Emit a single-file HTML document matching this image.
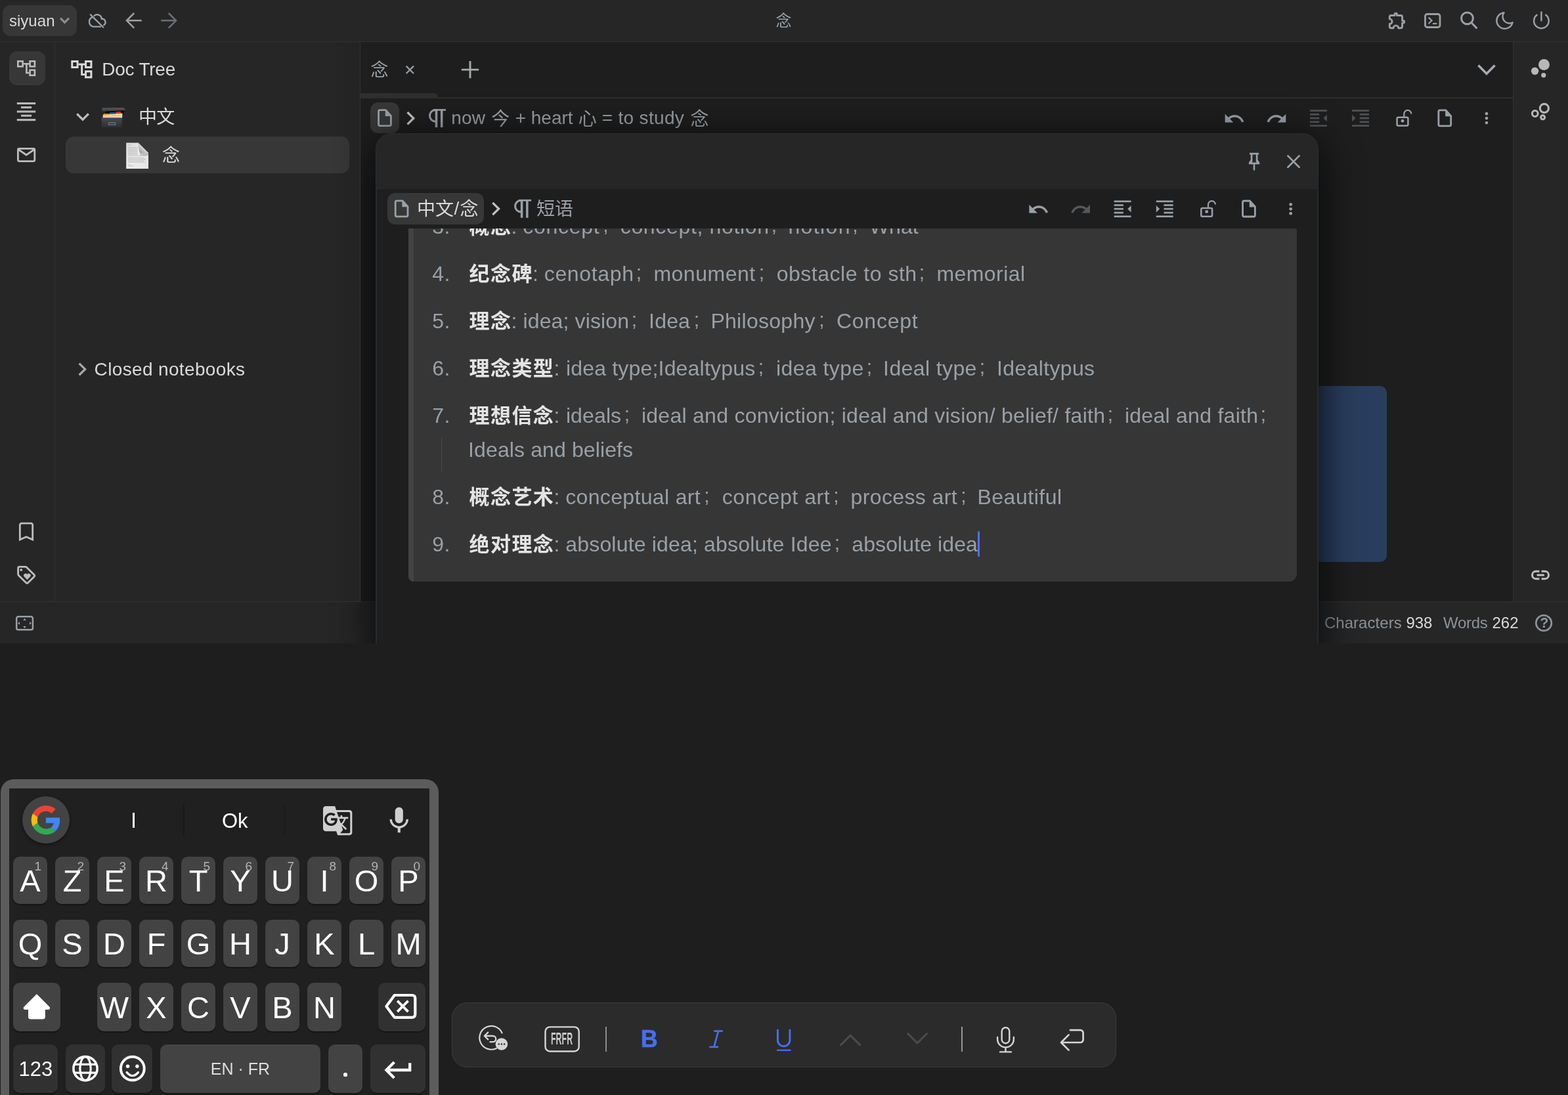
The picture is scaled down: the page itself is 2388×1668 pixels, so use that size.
<!DOCTYPE html>
<html><head><meta charset="utf-8"><title>siyuan</title>
<style>
html,body{margin:0;padding:0;background:#1e1e1e;}
body{width:2388px;height:1668px;position:relative;overflow:hidden;font-family:"Liberation Sans",sans-serif;}
.a{position:absolute;display:block;}
.t{position:absolute;line-height:1;white-space:pre;}
.c{font-family:"Liberation Sans","Noto Sans CJK SC",sans-serif;}
#root{position:absolute;left:0;top:0;width:2388px;height:1668px;will-change:transform;}
svg.a{fill:currentColor;overflow:visible;}
</style></head><body>
<div id="root">
<div class="a" style="left:0;top:0;width:2388px;height:980px;overflow:hidden;background:#1e1e1e">
<div class="a" style="left:0px;top:0px;width:2388px;height:63px;background:#262626;"></div>
<div class="a" style="left:0px;top:63px;width:2388px;height:1px;background:#323232;"></div>
<div class="a" style="left:0px;top:64px;width:83px;height:852px;background:#262626;"></div>
<div class="a" style="left:83px;top:64px;width:1px;height:852px;background:#323232;"></div>
<div class="a" style="left:84px;top:64px;width:464px;height:852px;background:#262626;"></div>
<div class="a" style="left:548px;top:64px;width:1px;height:852px;background:#323232;"></div>
<div class="a" style="left:2305px;top:64px;width:83px;height:852px;background:#262626;"></div>
<div class="a" style="left:2304px;top:64px;width:1px;height:852px;background:#323232;"></div>
<div class="a" style="left:0px;top:917px;width:2388px;height:63px;background:#262626;"></div>
<div class="a" style="left:0px;top:916px;width:2388px;height:1px;background:#323232;"></div>
<div class="a" style="left:549px;top:148px;width:1755px;height:2px;background:#2e2e2e;"></div>
<div class="a" style="left:549px;top:142px;width:118px;height:6px;background:#2f2f2f;border-radius:0 6px 0 0;"></div>
<div class="a" style="left:4px;top:8px;width:113px;height:47px;background:#373737;border-radius:12px;"></div>
<span class="t" style="left:13.88px;top:19.68px;font-size:24px;color:#dadada;letter-spacing:0.050px;">siyuan</span>
<div class="a" style="left:14px;top:78px;width:55px;height:52px;background:#373737;border-radius:12px;"></div>
<span class="t" style="left:155.25px;top:92.30px;font-size:28px;color:#dadada;letter-spacing:-0.232px;">Doc Tree</span>
<span class="t c" style="left:211.00px;top:165.36px;font-size:28px;color:#dadada;letter-spacing:-0.8px;">中文</span>
<div class="a" style="left:100px;top:208px;width:432px;height:56px;background:#373737;border-radius:12px;"></div>
<span class="t c" style="left:246.90px;top:224.24px;font-size:27px;color:#dadada;">念</span>
<span class="t" style="left:143.62px;top:549.30px;font-size:28px;color:#dadada;letter-spacing:0.350px;">Closed notebooks</span>
<span class="t c" style="left:1181.50px;top:20.38px;font-size:24px;color:#9aa0a6;">念</span>
<span class="t c" style="left:564.60px;top:94.24px;font-size:27px;color:#9aa0a6;">念</span>
<div class="a" style="left:564px;top:156px;width:44px;height:47px;background:#373737;border-radius:12px;"></div>
<span class="t" style="left:687.25px;top:166.30px;font-size:28px;color:#9aa0a6;letter-spacing:0.125px;">now</span>
<span class="t c" style="left:748.30px;top:167.86px;font-size:28px;color:#9aa0a6;">今</span>
<span class="t" style="left:784.65px;top:166.30px;font-size:28px;color:#9aa0a6;">+ heart</span>
<span class="t c" style="left:880.80px;top:167.86px;font-size:28px;color:#9aa0a6;">心</span>
<span class="t" style="left:916.75px;top:166.30px;font-size:28px;color:#9aa0a6;letter-spacing:0.314px;">= to study</span>
<span class="t c" style="left:1051.40px;top:167.86px;font-size:28px;color:#9aa0a6;">念</span>
<div class="a" style="left:1900px;top:588px;width:212px;height:268px;background:#293e5e;border-radius:10px;"></div>
<span class="t" style="left:2016.88px;top:936.68px;font-size:24px;color:#8c9298;letter-spacing:0.056px;">Characters</span>
<span class="t" style="left:2141.38px;top:936.68px;font-size:24px;color:#dadada;">938</span>
<span class="t" style="left:2198.00px;top:936.68px;font-size:24px;color:#8c9298;letter-spacing:-0.281px;">Words</span>
<span class="t" style="left:2272.38px;top:936.68px;font-size:24px;color:#dadada;letter-spacing:0.062px;">262</span>
<svg class="a" style="left:0;top:0;width:2388px;height:1668px;pointer-events:none" viewBox="0 0 2388 1668"><path d="M92 27.7 L98.5 34.2 L105 27.7" fill="none" stroke="#8c8c8c" stroke-width="3.2" stroke-linecap="butt" stroke-linejoin="miter"/><path d="M137.9 22.3 L157.3 41.5" fill="none" stroke="#9aa0a6" stroke-width="2.4" stroke-linecap="round" stroke-linejoin="miter"/><path d="M140.1 26.4 A7.6 7.6 0 0 0 142 40.6 L153 40.6" fill="none" stroke="#9aa0a6" stroke-width="2.4" stroke-linecap="round" stroke-linejoin="round"/><path d="M143.6 23.9 A6.8 6.8 0 0 1 154.8 28.9 A5 5 0 0 1 158.3 38" fill="none" stroke="#9aa0a6" stroke-width="2.4" stroke-linecap="round" stroke-linejoin="round"/><path d="M204.2 20 L192.9 31.3 L204.2 42.6 M193.2 31.3 L215.8 31.3" fill="none" stroke="#9aa0a6" stroke-width="2.5" stroke-linecap="butt" stroke-linejoin="miter"/><path d="M256.8 20 L268.1 31.3 L256.8 42.6 M267.8 31.3 L245.2 31.3" fill="none" stroke="#6b6f73" stroke-width="2.5" stroke-linecap="butt" stroke-linejoin="miter"/><path d="M2116.3 26 Q2116.3 23.5 2118.8 23.5 H2124.1 V21.9 A1.7 1.7 0 0 1 2127.5 21.9 V23.5 H2133.1 Q2135.6 23.5 2135.6 26 V31.5 H2137 A1.7 1.7 0 0 1 2137 34.9 H2135.6 V40.2 Q2135.6 42.7 2133.1 42.7 H2129.7 A3.8 3.8 0 0 0 2122.1 42.7 H2118.8 Q2116.3 42.7 2116.3 40.2 V36.5 A3.8 3.8 0 0 0 2116.3 28.9 Z" fill="none" stroke="#9aa0a6" stroke-width="2.9" stroke-linecap="round" stroke-linejoin="round"/><path d="M2173.5 21.5 h16.5 a3 3 0 0 1 3 3 v14 a3 3 0 0 1 -3 3 h-16.5 a3 3 0 0 1 -3 -3 v-14 a3 3 0 0 1 3 -3 z" fill="none" stroke="#9aa0a6" stroke-width="2.8" stroke-linecap="butt" stroke-linejoin="miter"/><path d="M2175.6 26.6 L2180.6 31.3 L2175.6 36" fill="none" stroke="#9aa0a6" stroke-width="2.2" stroke-linecap="butt" stroke-linejoin="miter"/><path d="M2182 36 H2188.3" fill="none" stroke="#9aa0a6" stroke-width="2.2" stroke-linecap="butt" stroke-linejoin="miter"/><path d="M2243.4 27.8 a8.9 8.9 0 1 1 -17.8 0 a8.9 8.9 0 1 1 17.8 0 z M2240.6 34.2 L2249.4 43.4" fill="none" stroke="#9aa0a6" stroke-width="3" stroke-linecap="butt" stroke-linejoin="miter"/><path d="M2290.5 19.2 A12.3 12.3 0 1 0 2303.6 34.2 A10.2 10.2 0 0 1 2290.5 19.2 Z" fill="none" stroke="#9aa0a6" stroke-width="2.4" stroke-linecap="round" stroke-linejoin="round"/><path d="M2340.6 22.8 A11.3 11.3 0 1 0 2354.2 22.8 M2347.4 18.6 V31.2" fill="none" stroke="#9aa0a6" stroke-width="2.5" stroke-linecap="round" stroke-linejoin="miter"/><path d="M27.30 93.30 h7.30 v8.00 h-7.30 zM45.60 93.30 h7.30 v8.00 h-7.30 zM45.60 106.70 h7.30 v8.00 h-7.30 z" fill="none" stroke="#bdbdbd" stroke-width="2.6" stroke-linecap="butt" stroke-linejoin="miter"/><path d="M35.90 97.30 H44.30 M40.40 97.30 V111.00 H44.30" fill="none" stroke="#bdbdbd" stroke-width="2.6" stroke-linecap="butt" stroke-linejoin="miter"/><path d="M109.78 93.48 h8.30 v9.10 h-8.30 zM130.59 93.48 h8.30 v9.10 h-8.30 zM130.59 108.71 h8.30 v9.10 h-8.30 z" fill="none" stroke="#dcdcdc" stroke-width="2.9562" stroke-linecap="butt" stroke-linejoin="miter"/><path d="M119.56 98.03 H129.11 M124.67 98.03 V113.60 H129.11" fill="none" stroke="#dcdcdc" stroke-width="2.9562" stroke-linecap="butt" stroke-linejoin="miter"/><path d="M25.8 157.5 H54.2" fill="none" stroke="#b9b9b9" stroke-width="3.1" stroke-linecap="butt" stroke-linejoin="miter"/><path d="M32 163.6 H48.1" fill="none" stroke="#b9b9b9" stroke-width="3.1" stroke-linecap="butt" stroke-linejoin="miter"/><path d="M25.8 170 H54.2" fill="none" stroke="#b9b9b9" stroke-width="3.1" stroke-linecap="butt" stroke-linejoin="miter"/><path d="M32 176.2 H48.1" fill="none" stroke="#b9b9b9" stroke-width="3.1" stroke-linecap="butt" stroke-linejoin="miter"/><path d="M25.8 182.6 H54.2" fill="none" stroke="#b9b9b9" stroke-width="3.1" stroke-linecap="butt" stroke-linejoin="miter"/><path d="M29.2 226.4 h21.8 a1.8 1.8 0 0 1 1.8 1.8 v15.6 a1.8 1.8 0 0 1 -1.8 1.8 h-21.8 a1.8 1.8 0 0 1 -1.8 -1.8 v-15.6 a1.8 1.8 0 0 1 1.8 -1.8 z M27.8 227.6 L40.1 236 L52.4 227.6" fill="none" stroke="#bdbdbd" stroke-width="2.8" stroke-linecap="butt" stroke-linejoin="round"/><path d="M117.2 173.4 L126 182.2 L134.8 173.4" fill="none" stroke="#bdbdbd" stroke-width="3.4" stroke-linecap="butt" stroke-linejoin="miter"/><path d="M120.6 553.6 L129.6 562.4 L120.6 571.2" fill="none" stroke="#a8a8a8" stroke-width="3.3" stroke-linecap="butt" stroke-linejoin="miter"/><defs>
<linearGradient id="bx1" x1="0" y1="0" x2="0" y2="1"><stop offset="0" stop-color="#474a4f"/><stop offset="1" stop-color="#2c2f33"/></linearGradient>
<linearGradient id="bx2" x1="0" y1="0" x2="0" y2="1"><stop offset="0" stop-color="#55585d"/><stop offset="1" stop-color="#3a3d41"/></linearGradient>
<linearGradient id="pg1" x1="0" y1="0" x2="1" y2="1"><stop offset="0" stop-color="#d9d9d9"/><stop offset=".5" stop-color="#ececec"/><stop offset="1" stop-color="#e4e4e4"/></linearGradient>
<linearGradient id="pg2" x1="0" y1="1" x2="1" y2="0"><stop offset="0" stop-color="#8a8a8a"/><stop offset=".45" stop-color="#d0d0d0"/><stop offset="1" stop-color="#f6f6f6"/></linearGradient>
</defs><path d="M161 168.5 L189.5 167.5 L189 175 L160 176 Z" fill="#0b0b0c"/><path d="M185.3 179.3 L191 167.6 L190.6 181.6 L185.6 193.8 Z" fill="#26292c"/><path d="M157 174.2 L186.5 172.6 L186 180 L156.4 180 Z" fill="#f1d99f"/><path d="M156.6 176.8 L186.3 175.3 L186.2 176.3 L156.5 177.8 Z" fill="#d9bd7c"/><path d="M158 173.3 L165.5 172.9 L166.3 175 L157.6 175.4 Z" fill="#f28a22"/><path d="M167 171.6 L174.8 171.2 L175.4 173.5 L166.6 173.9 Z" fill="#2d5fc6"/><path d="M176 170.4 L183.8 170 L184.6 172.4 L175.6 172.8 Z" fill="#de3f28"/><path d="M154.4 179.2 L185.6 179.2 L185.6 194 L154.8 194 Z" fill="url(#bx1)"/><path d="M155.2 166.2 Q155.2 164.4 157 164.3 L187.4 163.9 Q188.6 163.9 189.4 164.8 L191 166.8 L190.8 168.2 L156.6 169.6 Q155.2 169.6 155.2 168.2 Z" fill="url(#bx2)"/><path d="M166.6 186.8 h8.2 a1.4 1.4 0 0 1 1.4 1.4 v.6 a1.4 1.4 0 0 1 -1.4 1.4 h-8.2 a1.4 1.4 0 0 1 -1.4 -1.4 v-.6 a1.4 1.4 0 0 1 1.4 -1.4 z" fill="none" stroke="#74787d" stroke-width="1.3" stroke-linecap="butt" stroke-linejoin="miter"/><path d="M192.2 217.6 L210.5 217.6 L226 233 L226 257 L192.2 257 Z" fill="url(#pg1)"/><path d="M210.5 217.6 L226 233 L226 236.5 Q219 238.5 213.5 236 Q211.5 228 210.5 217.6 Z" fill="#9a9a9a" opacity=".55"/><path d="M210.5 217.6 L226 233 Q217 233.6 212.8 232.6 Q211.2 227 210.5 217.6 Z" fill="url(#pg2)"/><path d="M195 221 H200" fill="none" stroke="#b9b9b9" stroke-width="0.8" stroke-linecap="butt" stroke-linejoin="miter"/><path d="M195 224.4 H209.5" fill="none" stroke="#b9b9b9" stroke-width="0.8" stroke-linecap="butt" stroke-linejoin="miter"/><path d="M195 226.2 H209.5" fill="none" stroke="#b9b9b9" stroke-width="0.8" stroke-linecap="butt" stroke-linejoin="miter"/><path d="M195 228 H209.5" fill="none" stroke="#b9b9b9" stroke-width="0.8" stroke-linecap="butt" stroke-linejoin="miter"/><path d="M195 229.8 H209.5" fill="none" stroke="#b9b9b9" stroke-width="0.8" stroke-linecap="butt" stroke-linejoin="miter"/><path d="M195 231.6 H209.5" fill="none" stroke="#b9b9b9" stroke-width="0.8" stroke-linecap="butt" stroke-linejoin="miter"/><path d="M195 233.4 H209.5" fill="none" stroke="#b9b9b9" stroke-width="0.8" stroke-linecap="butt" stroke-linejoin="miter"/><path d="M195 235.2 H209.5" fill="none" stroke="#b9b9b9" stroke-width="0.8" stroke-linecap="butt" stroke-linejoin="miter"/><path d="M195 237 H222" fill="none" stroke="#b9b9b9" stroke-width="0.8" stroke-linecap="butt" stroke-linejoin="miter"/><path d="M195 240 H219" fill="none" stroke="#b9b9b9" stroke-width="0.8" stroke-linecap="butt" stroke-linejoin="miter"/><path d="M195 241.8 H222" fill="none" stroke="#b9b9b9" stroke-width="0.8" stroke-linecap="butt" stroke-linejoin="miter"/><path d="M195 243.6 H222" fill="none" stroke="#b9b9b9" stroke-width="0.8" stroke-linecap="butt" stroke-linejoin="miter"/><path d="M195 245.4 H219" fill="none" stroke="#b9b9b9" stroke-width="0.8" stroke-linecap="butt" stroke-linejoin="miter"/><path d="M195 247.2 H222" fill="none" stroke="#b9b9b9" stroke-width="0.8" stroke-linecap="butt" stroke-linejoin="miter"/><path d="M195 251 H200" fill="none" stroke="#b9b9b9" stroke-width="0.8" stroke-linecap="butt" stroke-linejoin="miter"/><path d="M195 253 H203.5" fill="none" stroke="#b9b9b9" stroke-width="0.8" stroke-linecap="butt" stroke-linejoin="miter"/><path transform="translate(1862.90 163.70) scale(1.4 1.42)" d="M12.5 8c-2.65 0-5.05.99-6.9 2.6L2 7v9h9l-3.62-3.62c1.39-1.16 3.16-1.88 5.12-1.88 3.54 0 6.55 2.31 7.6 5.5l2.37-.78C21.08 11.03 17.15 8 12.5 8z" fill="#9aa0a6"/><path transform="translate(1927.50 163.70) scale(1.4 1.42)" d="M18.4 10.6C16.55 8.99 14.15 8 11.5 8c-4.65 0-8.58 3.03-9.96 7.22L3.9 16c1.05-3.19 4.05-5.5 7.6-5.5 1.95 0 3.73.72 5.12 1.88L13 16h9V7l-3.6 3.6z" fill="#9aa0a6"/><path d="M1995.00 168.55 h25.9" fill="none" stroke="#505356" stroke-width="2.7" stroke-linecap="butt" stroke-linejoin="miter"/><path d="M1995.00 191.50 h25.9" fill="none" stroke="#505356" stroke-width="2.7" stroke-linecap="butt" stroke-linejoin="miter"/><path d="M1995.00 174.30 h14.2" fill="none" stroke="#505356" stroke-width="2.7" stroke-linecap="butt" stroke-linejoin="miter"/><path d="M1995.00 180.00 h14.2" fill="none" stroke="#505356" stroke-width="2.7" stroke-linecap="butt" stroke-linejoin="miter"/><path d="M1995.00 185.80 h14.2" fill="none" stroke="#505356" stroke-width="2.7" stroke-linecap="butt" stroke-linejoin="miter"/><path d="M2020.90 174.80 L2015.50 180.00 L2020.90 185.20 Z" fill="#505356"/><path d="M2059.10 168.55 h25.9" fill="none" stroke="#505356" stroke-width="2.7" stroke-linecap="butt" stroke-linejoin="miter"/><path d="M2059.10 191.50 h25.9" fill="none" stroke="#505356" stroke-width="2.7" stroke-linecap="butt" stroke-linejoin="miter"/><path d="M2070.80 174.30 h14.2" fill="none" stroke="#505356" stroke-width="2.7" stroke-linecap="butt" stroke-linejoin="miter"/><path d="M2070.80 180.00 h14.2" fill="none" stroke="#505356" stroke-width="2.7" stroke-linecap="butt" stroke-linejoin="miter"/><path d="M2070.80 185.80 h14.2" fill="none" stroke="#505356" stroke-width="2.7" stroke-linecap="butt" stroke-linejoin="miter"/><path d="M2059.10 174.80 L2064.50 180.00 L2059.10 185.20 Z" fill="#505356"/><path d="M2129.60 178.85 h12.8 a2 2 0 0 1 2 2 v8.6 a2 2 0 0 1 -2 2 h-12.8 a2 2 0 0 1 -2 -2 v-8.6 a2 2 0 0 1 2 -2 z" fill="none" stroke="#9aa0a6" stroke-width="2.5" stroke-linecap="butt" stroke-linejoin="miter"/><circle cx="2136.00" cy="184.20" r="2.4" fill="#9aa0a6"/><path d="M2138.30 178.60 V173.40 a5.5 5.5 0 0 1 11 0" fill="none" stroke="#9aa0a6" stroke-width="2.2" stroke-linecap="butt" stroke-linejoin="miter"/><path d="M2192.90 167.80 H2201.70 L2209.70 176.60 V189.80 a2 2 0 0 1 -2 2 H2192.90 a2 2 0 0 1 -2 -2 V169.80 a2 2 0 0 1 2 -2 z" fill="none" stroke="#9aa0a6" stroke-width="2.8" stroke-linecap="butt" stroke-linejoin="round"/><path d="M2201.10 167.40 L2210.30 177.30 H2201.10 Z" fill="#9aa0a6"/><circle cx="2264.00" cy="173.20" r="2.35" fill="#9aa0a6"/><circle cx="2264.00" cy="180.10" r="2.35" fill="#9aa0a6"/><circle cx="2264.00" cy="187.00" r="2.35" fill="#9aa0a6"/><path d="M578.60 167.60 H587.40 L595.40 176.40 V189.60 a2 2 0 0 1 -2 2 H578.60 a2 2 0 0 1 -2 -2 V169.60 a2 2 0 0 1 2 -2 z" fill="none" stroke="#9aa0a6" stroke-width="2.8" stroke-linecap="butt" stroke-linejoin="round"/><path d="M586.80 167.20 L596.00 177.10 H586.80 Z" fill="#9aa0a6"/><path d="M660.00 167.40 H679.00" fill="none" stroke="#9aa0a6" stroke-width="2.7" stroke-linecap="butt" stroke-linejoin="miter"/><path d="M664.50 166.20 V193.90 M672.70 166.20 V193.90" fill="none" stroke="#9aa0a6" stroke-width="3.5" stroke-linecap="butt" stroke-linejoin="miter"/><path d="M663.20 167.50 A8.75 8.75 0 0 0 663.20 185.00" fill="none" stroke="#9aa0a6" stroke-width="3.0" stroke-linecap="butt" stroke-linejoin="miter"/><path d="M620.5 171 L629.8 180.2 L620.5 189.4" fill="none" stroke="#c2c2c2" stroke-width="3.3" stroke-linecap="butt" stroke-linejoin="miter"/><path d="M618.6 100.6 L630 112 M630 100.6 L618.6 112" fill="none" stroke="#9aa0a6" stroke-width="2.2" stroke-linecap="butt" stroke-linejoin="miter"/><path d="M716 93 V119.2 M702.9 106.1 H729.1" fill="none" stroke="#a7abb0" stroke-width="2.9" stroke-linecap="butt" stroke-linejoin="miter"/><path d="M2251.4 99.6 L2264 112.2 L2276.6 99.6" fill="none" stroke="#a7abb0" stroke-width="3.6" stroke-linecap="butt" stroke-linejoin="miter"/><circle cx="2351.5" cy="98.4" r="8.5" fill="#b8b8b8"/><circle cx="2337.6" cy="108.3" r="5.7" fill="#b8b8b8"/><circle cx="2350.8" cy="114.6" r="3.65" fill="#b8b8b8"/><circle cx="2351.9" cy="164.9" r="6.55" fill="none" stroke="#b8b8b8" stroke-width="3.1"/><circle cx="2337.8" cy="173" r="4.4" fill="none" stroke="#b8b8b8" stroke-width="3.0"/><circle cx="2349.6" cy="178.8" r="3.0" fill="none" stroke="#b8b8b8" stroke-width="3.0"/><path d="M2344.4 870.35 H2339.1 a5.65 5.65 0 0 0 0 11.3 H2344.4 M2347.6 870.35 H2352.9 a5.65 5.65 0 0 1 0 11.3 H2347.6 M2340.6 876 H2351.8" fill="none" stroke="#c0c0c0" stroke-width="3.0" stroke-linecap="butt" stroke-linejoin="miter"/><circle cx="2351.1" cy="949.1" r="11.8" fill="none" stroke="#8f959b" stroke-width="2.6"/><path d="M30.35 822 V799.6 a2.4 2.4 0 0 1 2.4 -2.4 H47.3 a2.4 2.4 0 0 1 2.4 2.4 V822 L40.02 817.7 Z" fill="none" stroke="#bdbdbd" stroke-width="2.8" stroke-linecap="butt" stroke-linejoin="miter"/><path d="M29.6 863.4 H38.8 Q39.8 863.4 40.6 864.2 L52 875.6 Q53.4 877 52 878.4 L42.6 887.8 Q41.2 889.2 39.8 887.8 L28.4 876.4 Q27.6 875.6 27.6 874.6 V865.4 Q27.6 863.4 29.6 863.4 Z" fill="none" stroke="#bdbdbd" stroke-width="2.8" stroke-linecap="round" stroke-linejoin="round"/><circle cx="32.2" cy="868.2" r="1.9" fill="#bdbdbd"/><path d="M41.4 883.2 L36.6 878.2 A2.9 2.9 0 0 1 41.4 874.9 A2.9 2.9 0 0 1 46.2 878.2 Z" fill="#bdbdbd"/><path d="M27.8 939.35 h19.5 a2.6 2.6 0 0 1 2.6 2.6 v14.8 a2.6 2.6 0 0 1 -2.6 2.6 h-19.5 a2.6 2.6 0 0 1 -2.6 -2.6 v-14.8 a2.6 2.6 0 0 1 2.6 -2.6 z" fill="none" stroke="#9aa0a6" stroke-width="2.5" stroke-linecap="butt" stroke-linejoin="miter"/><path d="M35.2 945 L37.55 942 L39.9 945 Z M35.2 954 L37.55 957 L39.9 954 Z M30 947.1 L27.2 949.4 L30 951.7 Z M45.1 947.1 L47.9 949.4 L45.1 951.7 Z" fill="#9aa0a6"/></svg>
<span class="t" style="left:2345.22px;top:939.40px;font-size:21.5px;color:#8f959b;font-weight:bold;">?</span>
<div class="a" style="left:549px;top:64px;width:1839px;height:916px;overflow:hidden"><div class="a" style="left:23px;top:139px;width:1436px;height:800px;border-radius:24px;box-shadow:0 14px 62px rgba(0,3,6,.92)"></div></div>
<div class="a" style="left:0;top:917px;width:549px;height:63px;overflow:hidden"><div class="a" style="left:572px;top:-714px;width:1436px;height:800px;border-radius:24px;box-shadow:0 14px 62px rgba(0,3,6,.92)"></div></div>
<div class="a" style="left:500px;top:64px;width:48px;height:852px;background:linear-gradient(90deg,rgba(0,0,0,0),rgba(0,6,6,.09))"></div>
<div class="a" style="left:572px;top:203px;width:1436px;height:800px;border-radius:24px;background:#262626;box-shadow:0 0 0 1px rgba(255,255,255,.04) inset;overflow:hidden">
<div class="a" style="left:-572px;top:-203px;width:2388px;height:1000px">
<div class="a" style="left:572px;top:288px;width:1436px;height:60px;background:#1e1e1e;"></div>
<div class="a" style="left:572px;top:348px;width:1436px;height:640px;background:#1e1e1e;"></div>
<div class="a" style="left:622px;top:340px;width:1353px;height:546px;background:#363636;border-radius:12px;"></div>
<div class="a" style="left:622px;top:340px;width:8px;height:546px;background:#434343;border-radius:12px 0 0 12px;"></div>
<span class="t" style="left:658.3px;top:328.91px;font-size:32px;color:#9aa0a6;letter-spacing:.4px">3.</span>
<span class="t c" style="left:714.60px;top:329.92px;font-size:31px;color:#e4e4e4;font-weight:bold;letter-spacing:1.4px;">概念</span>
<span class="t" style="left:778.52px;top:328.91px;font-size:32px;color:#9aa0a6;">:</span>
<span class="t" style="left:796.25px;top:328.91px;font-size:32px;color:#9aa0a6;letter-spacing:0.708px;">concept</span>
<span class="t" style="left:918.27px;top:328.41px;font-size:30px;color:#9aa0a6;">;</span>
<span class="t" style="left:944.75px;top:328.91px;font-size:32px;color:#9aa0a6;letter-spacing:0.661px;">concept, notion</span>
<span class="t" style="left:1174.78px;top:328.41px;font-size:30px;color:#9aa0a6;">;</span>
<span class="t" style="left:1200.38px;top:328.91px;font-size:32px;color:#9aa0a6;letter-spacing:1.400px;">notion</span>
<span class="t" style="left:1298.28px;top:328.41px;font-size:30px;color:#9aa0a6;">;</span>
<span class="t" style="left:1323.88px;top:328.91px;font-size:32px;color:#9aa0a6;letter-spacing:0.042px;">What</span>
<span class="t" style="left:658.3px;top:400.91px;font-size:32px;color:#9aa0a6;letter-spacing:.4px">4.</span>
<span class="t c" style="left:714.60px;top:401.92px;font-size:31px;color:#e4e4e4;font-weight:bold;letter-spacing:1.4px;">纪念碑</span>
<span class="t" style="left:810.98px;top:400.91px;font-size:32px;color:#9aa0a6;">:</span>
<span class="t" style="left:828.75px;top:400.91px;font-size:32px;color:#9aa0a6;letter-spacing:0.661px;">cenotaph</span>
<span class="t" style="left:968.77px;top:400.41px;font-size:30px;color:#9aa0a6;">;</span>
<span class="t" style="left:995.38px;top:400.91px;font-size:32px;color:#9aa0a6;letter-spacing:0.518px;">monument</span>
<span class="t" style="left:1155.78px;top:400.41px;font-size:30px;color:#9aa0a6;">;</span>
<span class="t" style="left:1182.75px;top:400.91px;font-size:32px;color:#9aa0a6;letter-spacing:0.500px;">obstacle to sth</span>
<span class="t" style="left:1399.78px;top:400.41px;font-size:30px;color:#9aa0a6;">;</span>
<span class="t" style="left:1426.38px;top:400.91px;font-size:32px;color:#9aa0a6;letter-spacing:0.446px;">memorial</span>
<span class="t" style="left:658.3px;top:472.91px;font-size:32px;color:#9aa0a6;letter-spacing:.4px">5.</span>
<span class="t c" style="left:714.60px;top:473.92px;font-size:31px;color:#e4e4e4;font-weight:bold;letter-spacing:1.4px;">理念</span>
<span class="t" style="left:778.52px;top:472.91px;font-size:32px;color:#9aa0a6;">:</span>
<span class="t" style="left:796.48px;top:472.91px;font-size:32px;color:#9aa0a6;letter-spacing:0.139px;">idea; vision</span>
<span class="t" style="left:961.77px;top:472.41px;font-size:30px;color:#9aa0a6;">;</span>
<span class="t" style="left:988.12px;top:472.91px;font-size:32px;color:#9aa0a6;letter-spacing:0.167px;">Idea</span>
<span class="t" style="left:1056.78px;top:472.41px;font-size:30px;color:#9aa0a6;">;</span>
<span class="t" style="left:1082.38px;top:472.91px;font-size:32px;color:#9aa0a6;letter-spacing:0.292px;">Philosophy</span>
<span class="t" style="left:1247.28px;top:472.41px;font-size:30px;color:#9aa0a6;">;</span>
<span class="t" style="left:1273.88px;top:472.91px;font-size:32px;color:#9aa0a6;letter-spacing:0.771px;">Concept</span>
<span class="t" style="left:658.3px;top:544.91px;font-size:32px;color:#9aa0a6;letter-spacing:.4px">6.</span>
<span class="t c" style="left:714.60px;top:545.92px;font-size:31px;color:#e4e4e4;font-weight:bold;letter-spacing:1.4px;">理念类型</span>
<span class="t" style="left:843.42px;top:544.91px;font-size:32px;color:#9aa0a6;">:</span>
<span class="t" style="left:861.88px;top:544.91px;font-size:32px;color:#9aa0a6;letter-spacing:0.191px;">idea type;Idealtypus</span>
<span class="t" style="left:1154.78px;top:544.40px;font-size:30px;color:#9aa0a6;">;</span>
<span class="t" style="left:1181.88px;top:544.91px;font-size:32px;color:#9aa0a6;letter-spacing:0.453px;">idea type</span>
<span class="t" style="left:1319.78px;top:544.40px;font-size:30px;color:#9aa0a6;">;</span>
<span class="t" style="left:1345.12px;top:544.91px;font-size:32px;color:#9aa0a6;letter-spacing:0.389px;">Ideal type</span>
<span class="t" style="left:1491.78px;top:544.40px;font-size:30px;color:#9aa0a6;">;</span>
<span class="t" style="left:1518.12px;top:544.91px;font-size:32px;color:#9aa0a6;letter-spacing:0.347px;">Idealtypus</span>
<span class="t" style="left:658.3px;top:616.91px;font-size:32px;color:#9aa0a6;letter-spacing:.4px">7.</span>
<span class="t c" style="left:714.60px;top:617.92px;font-size:31px;color:#e4e4e4;font-weight:bold;letter-spacing:1.4px;">理想信念</span>
<span class="t" style="left:843.42px;top:616.91px;font-size:32px;color:#9aa0a6;">:</span>
<span class="t" style="left:861.88px;top:616.91px;font-size:32px;color:#9aa0a6;letter-spacing:0.125px;">ideals</span>
<span class="t" style="left:950.77px;top:616.40px;font-size:30px;color:#9aa0a6;">;</span>
<span class="t" style="left:976.88px;top:616.91px;font-size:32px;color:#9aa0a6;letter-spacing:0.272px;">ideal and conviction; ideal and vision/ belief/ faith</span>
<span class="t" style="left:1686.78px;top:616.40px;font-size:30px;color:#9aa0a6;">;</span>
<span class="t" style="left:1712.88px;top:616.91px;font-size:32px;color:#9aa0a6;letter-spacing:0.277px;">ideal and faith</span>
<span class="t" style="left:1919.78px;top:616.40px;font-size:30px;color:#9aa0a6;">;</span>
<span class="t" style="left:658.3px;top:740.91px;font-size:32px;color:#9aa0a6;letter-spacing:.4px">8.</span>
<span class="t c" style="left:714.60px;top:741.92px;font-size:31px;color:#e4e4e4;font-weight:bold;letter-spacing:1.4px;">概念艺术</span>
<span class="t" style="left:843.42px;top:740.91px;font-size:32px;color:#9aa0a6;">:</span>
<span class="t" style="left:861.25px;top:740.91px;font-size:32px;color:#9aa0a6;letter-spacing:0.337px;">conceptual art</span>
<span class="t" style="left:1072.28px;top:740.40px;font-size:30px;color:#9aa0a6;">;</span>
<span class="t" style="left:1099.75px;top:740.91px;font-size:32px;color:#9aa0a6;letter-spacing:0.562px;">concept art</span>
<span class="t" style="left:1269.28px;top:740.40px;font-size:30px;color:#9aa0a6;">;</span>
<span class="t" style="left:1295.50px;top:740.91px;font-size:32px;color:#9aa0a6;letter-spacing:0.388px;">process art</span>
<span class="t" style="left:1463.28px;top:740.40px;font-size:30px;color:#9aa0a6;">;</span>
<span class="t" style="left:1488.38px;top:740.91px;font-size:32px;color:#9aa0a6;letter-spacing:0.531px;">Beautiful</span>
<span class="t" style="left:658.3px;top:812.91px;font-size:32px;color:#9aa0a6;letter-spacing:.4px">9.</span>
<span class="t c" style="left:714.60px;top:813.92px;font-size:31px;color:#e4e4e4;font-weight:bold;letter-spacing:1.4px;">绝对理念</span>
<span class="t" style="left:843.42px;top:812.91px;font-size:32px;color:#9aa0a6;">:</span>
<span class="t" style="left:861.25px;top:812.91px;font-size:32px;color:#9aa0a6;letter-spacing:0.181px;">absolute idea; absolute Idee</span>
<span class="t" style="left:1270.78px;top:812.40px;font-size:30px;color:#9aa0a6;">;</span>
<span class="t" style="left:1297.25px;top:812.91px;font-size:32px;color:#9aa0a6;letter-spacing:0.104px;">absolute idea</span>
<span class="t" style="left:713.12px;top:668.91px;font-size:32px;color:#9aa0a6;letter-spacing:0.110px;">Ideals and beliefs</span>
<div class="a" style="left:672px;top:666px;width:1px;height:52px;background:#4a4a4a;"></div>
<div class="a" style="left:1488.5px;top:809px;width:3px;height:39px;background:#4c72f0;border-radius:1.5px;"></div>
<div class="a" style="left:572px;top:288px;width:1436px;height:60px;background:#1e1e1e;"></div>
<div class="a" style="left:590px;top:294px;width:147px;height:48px;background:#373737;border-radius:12px;"></div>
<span class="t c" style="left:635.00px;top:305.36px;font-size:28px;color:#dadada;">中文</span>
<span class="t" style="left:691.60px;top:304.30px;font-size:28px;color:#dadada;">/</span>
<span class="t c" style="left:700.60px;top:305.36px;font-size:28px;color:#dadada;">念</span>
<span class="t c" style="left:817.00px;top:305.36px;font-size:28px;color:#9aa0a6;">短语</span>
<div class="a" style="left:572px;top:288px;width:2px;height:700px;background:#2a2a2a;"></div>
<div class="a" style="left:2006px;top:288px;width:2px;height:700px;background:#2a2a2a;"></div>
<svg class="a" style="left:0;top:0;width:2388px;height:1668px;pointer-events:none" viewBox="0 0 2388 1668"><path transform="translate(1564.60 301.90) scale(1.4 1.42)" d="M12.5 8c-2.65 0-5.05.99-6.9 2.6L2 7v9h9l-3.62-3.62c1.39-1.16 3.16-1.88 5.12-1.88 3.54 0 6.55 2.31 7.6 5.5l2.37-.78C21.08 11.03 17.15 8 12.5 8z" fill="#9aa0a6"/><path transform="translate(1629.20 301.90) scale(1.4 1.42)" d="M18.4 10.6C16.55 8.99 14.15 8 11.5 8c-4.65 0-8.58 3.03-9.96 7.22L3.9 16c1.05-3.19 4.05-5.5 7.6-5.5 1.95 0 3.73.72 5.12 1.88L13 16h9V7l-3.6 3.6z" fill="#55585b"/><path d="M1696.70 306.75 h25.9" fill="none" stroke="#9aa0a6" stroke-width="2.7" stroke-linecap="butt" stroke-linejoin="miter"/><path d="M1696.70 329.70 h25.9" fill="none" stroke="#9aa0a6" stroke-width="2.7" stroke-linecap="butt" stroke-linejoin="miter"/><path d="M1696.70 312.50 h14.2" fill="none" stroke="#9aa0a6" stroke-width="2.7" stroke-linecap="butt" stroke-linejoin="miter"/><path d="M1696.70 318.20 h14.2" fill="none" stroke="#9aa0a6" stroke-width="2.7" stroke-linecap="butt" stroke-linejoin="miter"/><path d="M1696.70 324.00 h14.2" fill="none" stroke="#9aa0a6" stroke-width="2.7" stroke-linecap="butt" stroke-linejoin="miter"/><path d="M1722.60 313.00 L1717.20 318.20 L1722.60 323.40 Z" fill="#9aa0a6"/><path d="M1760.80 306.75 h25.9" fill="none" stroke="#9aa0a6" stroke-width="2.7" stroke-linecap="butt" stroke-linejoin="miter"/><path d="M1760.80 329.70 h25.9" fill="none" stroke="#9aa0a6" stroke-width="2.7" stroke-linecap="butt" stroke-linejoin="miter"/><path d="M1772.50 312.50 h14.2" fill="none" stroke="#9aa0a6" stroke-width="2.7" stroke-linecap="butt" stroke-linejoin="miter"/><path d="M1772.50 318.20 h14.2" fill="none" stroke="#9aa0a6" stroke-width="2.7" stroke-linecap="butt" stroke-linejoin="miter"/><path d="M1772.50 324.00 h14.2" fill="none" stroke="#9aa0a6" stroke-width="2.7" stroke-linecap="butt" stroke-linejoin="miter"/><path d="M1760.80 313.00 L1766.20 318.20 L1760.80 323.40 Z" fill="#9aa0a6"/><path d="M1831.30 317.05 h12.8 a2 2 0 0 1 2 2 v8.6 a2 2 0 0 1 -2 2 h-12.8 a2 2 0 0 1 -2 -2 v-8.6 a2 2 0 0 1 2 -2 z" fill="none" stroke="#9aa0a6" stroke-width="2.5" stroke-linecap="butt" stroke-linejoin="miter"/><circle cx="1837.70" cy="322.40" r="2.4" fill="#9aa0a6"/><path d="M1840.00 316.80 V311.60 a5.5 5.5 0 0 1 11 0" fill="none" stroke="#9aa0a6" stroke-width="2.2" stroke-linecap="butt" stroke-linejoin="miter"/><path d="M1894.60 306.00 H1903.40 L1911.40 314.80 V328.00 a2 2 0 0 1 -2 2 H1894.60 a2 2 0 0 1 -2 -2 V308.00 a2 2 0 0 1 2 -2 z" fill="none" stroke="#9aa0a6" stroke-width="2.8" stroke-linecap="butt" stroke-linejoin="round"/><path d="M1902.80 305.60 L1912.00 315.50 H1902.80 Z" fill="#9aa0a6"/><circle cx="1965.70" cy="311.40" r="2.35" fill="#9aa0a6"/><circle cx="1965.70" cy="318.30" r="2.35" fill="#9aa0a6"/><circle cx="1965.70" cy="325.20" r="2.35" fill="#9aa0a6"/><path d="M604.20 305.80 H613.00 L621.00 314.60 V327.80 a2 2 0 0 1 -2 2 H604.20 a2 2 0 0 1 -2 -2 V307.80 a2 2 0 0 1 2 -2 z" fill="none" stroke="#9aa0a6" stroke-width="2.8" stroke-linecap="butt" stroke-linejoin="round"/><path d="M612.40 305.40 L621.60 315.30 H612.40 Z" fill="#9aa0a6"/><path d="M790.10 305.20 H809.10" fill="none" stroke="#9aa0a6" stroke-width="2.7" stroke-linecap="butt" stroke-linejoin="miter"/><path d="M794.60 304.00 V331.70 M802.80 304.00 V331.70" fill="none" stroke="#9aa0a6" stroke-width="3.5" stroke-linecap="butt" stroke-linejoin="miter"/><path d="M793.30 305.30 A8.75 8.75 0 0 0 793.30 322.80" fill="none" stroke="#9aa0a6" stroke-width="3.0" stroke-linecap="butt" stroke-linejoin="miter"/><path d="M750.3 308.8 L759.6 318 L750.3 327.2" fill="none" stroke="#c2c2c2" stroke-width="3.3" stroke-linecap="butt" stroke-linejoin="miter"/><path d="M1903 234.2 H1917.1 M1906.1 235 V246.4 M1914.15 235 V246.4" fill="none" stroke="#9aa0a6" stroke-width="2.7" stroke-linecap="butt" stroke-linejoin="miter"/><path d="M1904.8 243.6 L1901.9 247.4 L1901.9 250.2 L1918.2 250.2 L1918.2 247.4 L1915.5 243.6 L1913 247.4 L1907.2 247.4 Z" fill="#9aa0a6"/><path d="M1910 250 V258.6" fill="none" stroke="#9aa0a6" stroke-width="2.5" stroke-linecap="round" stroke-linejoin="miter"/><path d="M1961.4 237.4 L1978.6 254.8 M1978.6 237.4 L1961.4 254.8" fill="none" stroke="#9aa0a6" stroke-width="2.7" stroke-linecap="round" stroke-linejoin="miter"/></svg>
</div></div>
</div>
<div class="a" style="left:1px;top:1187px;width:667px;height:520px;border-radius:20px;background:#5c5c5c"></div>
<div class="a" style="left:14px;top:1201px;width:640px;height:480px;background:#202020;"></div>
<div class="a" style="left:20px;top:1305px;width:52px;height:72px;background:#434343;border-radius:10px;box-shadow:0 2px 1px rgba(0,0,0,.35);"></div>
<div class="a" style="left:84px;top:1305px;width:52px;height:72px;background:#434343;border-radius:10px;box-shadow:0 2px 1px rgba(0,0,0,.35);"></div>
<div class="a" style="left:148px;top:1305px;width:52px;height:72px;background:#434343;border-radius:10px;box-shadow:0 2px 1px rgba(0,0,0,.35);"></div>
<div class="a" style="left:212px;top:1305px;width:52px;height:72px;background:#434343;border-radius:10px;box-shadow:0 2px 1px rgba(0,0,0,.35);"></div>
<div class="a" style="left:276px;top:1305px;width:52px;height:72px;background:#434343;border-radius:10px;box-shadow:0 2px 1px rgba(0,0,0,.35);"></div>
<div class="a" style="left:340px;top:1305px;width:52px;height:72px;background:#434343;border-radius:10px;box-shadow:0 2px 1px rgba(0,0,0,.35);"></div>
<div class="a" style="left:404px;top:1305px;width:52px;height:72px;background:#434343;border-radius:10px;box-shadow:0 2px 1px rgba(0,0,0,.35);"></div>
<div class="a" style="left:468px;top:1305px;width:52px;height:72px;background:#434343;border-radius:10px;box-shadow:0 2px 1px rgba(0,0,0,.35);"></div>
<div class="a" style="left:532px;top:1305px;width:52px;height:72px;background:#434343;border-radius:10px;box-shadow:0 2px 1px rgba(0,0,0,.35);"></div>
<div class="a" style="left:596px;top:1305px;width:52px;height:72px;background:#434343;border-radius:10px;box-shadow:0 2px 1px rgba(0,0,0,.35);"></div>
<div class="a" style="left:20px;top:1401px;width:52px;height:72px;background:#434343;border-radius:10px;box-shadow:0 2px 1px rgba(0,0,0,.35);"></div>
<div class="a" style="left:84px;top:1401px;width:52px;height:72px;background:#434343;border-radius:10px;box-shadow:0 2px 1px rgba(0,0,0,.35);"></div>
<div class="a" style="left:148px;top:1401px;width:52px;height:72px;background:#434343;border-radius:10px;box-shadow:0 2px 1px rgba(0,0,0,.35);"></div>
<div class="a" style="left:212px;top:1401px;width:52px;height:72px;background:#434343;border-radius:10px;box-shadow:0 2px 1px rgba(0,0,0,.35);"></div>
<div class="a" style="left:276px;top:1401px;width:52px;height:72px;background:#434343;border-radius:10px;box-shadow:0 2px 1px rgba(0,0,0,.35);"></div>
<div class="a" style="left:340px;top:1401px;width:52px;height:72px;background:#434343;border-radius:10px;box-shadow:0 2px 1px rgba(0,0,0,.35);"></div>
<div class="a" style="left:404px;top:1401px;width:52px;height:72px;background:#434343;border-radius:10px;box-shadow:0 2px 1px rgba(0,0,0,.35);"></div>
<div class="a" style="left:468px;top:1401px;width:52px;height:72px;background:#434343;border-radius:10px;box-shadow:0 2px 1px rgba(0,0,0,.35);"></div>
<div class="a" style="left:532px;top:1401px;width:52px;height:72px;background:#434343;border-radius:10px;box-shadow:0 2px 1px rgba(0,0,0,.35);"></div>
<div class="a" style="left:596px;top:1401px;width:52px;height:72px;background:#434343;border-radius:10px;box-shadow:0 2px 1px rgba(0,0,0,.35);"></div>
<div class="a" style="left:148px;top:1497px;width:52px;height:74px;background:#434343;border-radius:10px;box-shadow:0 2px 1px rgba(0,0,0,.35);"></div>
<div class="a" style="left:212px;top:1497px;width:52px;height:74px;background:#434343;border-radius:10px;box-shadow:0 2px 1px rgba(0,0,0,.35);"></div>
<div class="a" style="left:276px;top:1497px;width:52px;height:74px;background:#434343;border-radius:10px;box-shadow:0 2px 1px rgba(0,0,0,.35);"></div>
<div class="a" style="left:340px;top:1497px;width:52px;height:74px;background:#434343;border-radius:10px;box-shadow:0 2px 1px rgba(0,0,0,.35);"></div>
<div class="a" style="left:404px;top:1497px;width:52px;height:74px;background:#434343;border-radius:10px;box-shadow:0 2px 1px rgba(0,0,0,.35);"></div>
<div class="a" style="left:468px;top:1497px;width:52px;height:74px;background:#434343;border-radius:10px;box-shadow:0 2px 1px rgba(0,0,0,.35);"></div>
<div class="a" style="left:20px;top:1497px;width:72px;height:74px;background:#434343;border-radius:10px;box-shadow:0 2px 1px rgba(0,0,0,.35);"></div>
<div class="a" style="left:576px;top:1497px;width:72px;height:74px;background:#313131;border-radius:10px;box-shadow:0 2px 1px rgba(0,0,0,.35);"></div>
<div class="a" style="left:20px;top:1591px;width:68px;height:74px;background:#313131;border-radius:10px;box-shadow:0 2px 1px rgba(0,0,0,.35);"></div>
<div class="a" style="left:100px;top:1591px;width:60px;height:74px;background:#313131;border-radius:10px;box-shadow:0 2px 1px rgba(0,0,0,.35);"></div>
<div class="a" style="left:170px;top:1591px;width:62px;height:74px;background:#313131;border-radius:10px;box-shadow:0 2px 1px rgba(0,0,0,.35);"></div>
<div class="a" style="left:244px;top:1591px;width:244px;height:74px;background:#434343;border-radius:10px;box-shadow:0 2px 1px rgba(0,0,0,.35);"></div>
<div class="a" style="left:500px;top:1591px;width:52px;height:74px;background:#434343;border-radius:10px;box-shadow:0 2px 1px rgba(0,0,0,.35);"></div>
<div class="a" style="left:564px;top:1591px;width:84px;height:74px;background:#313131;border-radius:10px;box-shadow:0 2px 1px rgba(0,0,0,.35);"></div>
<div class="a" style="left:523.4px;top:1634.4px;width:5.2px;height:5.2px;background:#ffffff;border-radius:2.6px;"></div>
<div class="a" style="left:34px;top:1213px;width:72px;height:72px;border-radius:36px;background:#434343;box-shadow:0 2px 5px rgba(0,0,0,.45)"></div>
<div class="a" style="left:201.6px;top:1238.2px;width:3.6px;height:22.8px;background:#ffffff;"></div>
<div class="a" style="left:279.4px;top:1225px;width:1.2px;height:48px;background:#181818;"></div>
<div class="a" style="left:433.2px;top:1225px;width:1.2px;height:48px;background:#181818;"></div>
<div class="a" style="left:688px;top:1527px;width:1012px;height:99px;border-radius:24px;background:#2b2b2b;box-shadow:0 0 0 1px #3a3a3a inset"></div>
<div class="a" style="left:921.8px;top:1564px;width:2px;height:38px;background:#8c8c8c;"></div>
<div class="a" style="left:1464px;top:1564px;width:2px;height:38px;background:#9a9a9a;"></div>
<svg class="a" style="left:0;top:0;width:2388px;height:1668px;pointer-events:none" viewBox="0 0 2388 1668"><path transform="translate(47.7 1226.9) scale(0.925)" d="M24 9.5c3.54 0 6.71 1.22 9.21 3.6l6.85-6.85C35.9 2.38 30.47 0 24 0 14.62 0 6.51 5.38 2.56 13.22l7.98 6.19C12.43 13.72 17.74 9.5 24 9.5z" fill="#EA4335"/><path transform="translate(47.7 1226.9) scale(0.925)" d="M46.98 24.55c0-1.57-.15-3.09-.38-4.55H24v9.02h12.94c-.58 2.96-2.26 5.48-4.78 7.18l7.73 6c4.51-4.18 7.09-10.36 7.09-17.65z" fill="#4285F4"/><path transform="translate(47.7 1226.9) scale(0.925)" d="M10.53 28.59c-.48-1.45-.76-2.99-.76-4.59s.27-3.14.76-4.59l-7.98-6.19C.92 16.46 0 20.12 0 24c0 3.88.92 7.54 2.56 10.78l7.97-6.19z" fill="#FBBC05"/><path transform="translate(47.7 1226.9) scale(0.925)" d="M24 48c6.48 0 11.93-2.13 15.89-5.81l-7.73-6c-2.15 1.45-4.92 2.3-8.16 2.3-6.26 0-11.57-4.22-13.47-9.91l-7.98 6.19C6.51 42.62 14.62 48 24 48z" fill="#34A853"/><path transform="translate(490 1225.9) scale(2.014)" d="M21 4H11l-1-3H3c-1.1 0-2 .9-2 2v15c0 1.1.9 2 2 2h8l1 3h9c1.1 0 2-.9 2-2V6c0-1.1-.9-2-2-2zM7 16c-2.76 0-5-2.24-5-5s2.24-5 5-5c1.35 0 2.48.5 3.35 1.3L9.03 8.57c-.38-.36-1.04-.78-2.03-.78-1.74 0-3.15 1.44-3.15 3.21S5.26 14.21 7 14.21c2.01 0 2.84-1.44 2.92-2.41H7v-1.71h4.68c.07.31.12.61.12 1.02C11.8 13.97 9.89 16 7 16zm6.17-5.42h3.7c-.43 1.25-1.11 2.43-2.05 3.47-.31-.35-.6-.72-.86-1.1l-.79-2.37zm8.33 9.92c0 .55-.45 1-1 1H14l2-2.5-1.04-3.1 3.1 3.1.92-.92-3.3-3.25.02-.02c1.13-1.25 1.93-2.69 2.4-4.22H20v-1.3h-4.53V8h-1.29v1.29h-1.44L11.46 5.5h9.04c.55 0 1 .45 1 1v14z" fill="#cfcfcf"/><path transform="translate(583.4 1225.7) scale(2.03)" d="M12 14c1.66 0 2.99-1.34 2.99-3L15 5c0-1.66-1.34-3-3-3S9 3.34 9 5v6c0 1.66 1.34 3 3 3zm5.3-3c0 3-2.54 5.1-5.3 5.1S6.7 14 6.7 11H5c0 3.41 2.72 6.23 6 6.72V21h2v-3.28c3.28-.48 6-3.3 6-6.72h-1.7z" fill="#cfcfcf"/><path d="M55.9 1515.3 L74.6 1534 Q76.6 1536.6 73.4 1537.2 H68 V1549 Q68 1551.8 65.2 1551.8 H46.6 Q43.8 1551.8 43.8 1549 V1537.2 H38.4 Q35.2 1536.6 37.2 1534 Z" fill="#ffffff" stroke="#ffffff" stroke-width="1.6" stroke-linejoin="round"/><path d="M600.8 1516 H627.3 Q632.3 1516 632.3 1521 V1544.8 Q632.3 1549.8 627.3 1549.8 H600.8 L588.4 1532.9 Z" fill="none" stroke="#ffffff" stroke-width="4.2" stroke-linecap="butt" stroke-linejoin="round"/><path d="M605.2 1524.6 L621.6 1541.2 M621.6 1524.6 L605.2 1541.2" fill="none" stroke="#ffffff" stroke-width="3.8" stroke-linecap="butt" stroke-linejoin="miter"/><circle cx="130" cy="1627.7" r="18.1" fill="none" stroke="#ffffff" stroke-width="3.6"/><ellipse cx="130" cy="1627.7" rx="8.2" ry="18.1" fill="none" stroke="#ffffff" stroke-width="3.2"/><path d="M113.4 1621.3 H146.6 M113.4 1634.1 H146.6" fill="none" stroke="#ffffff" stroke-width="3.2" stroke-linecap="butt" stroke-linejoin="miter"/><circle cx="201.8" cy="1627.7" r="17.9" fill="none" stroke="#ffffff" stroke-width="4"/><circle cx="194.6" cy="1624.2" r="2.7" fill="#ffffff"/><circle cx="208.9" cy="1624.2" r="2.7" fill="#ffffff"/><path d="M193.2 1633.6 Q201.8 1643.6 210.4 1633.6" fill="none" stroke="#ffffff" stroke-width="3.4" stroke-linecap="round" stroke-linejoin="miter"/><path d="M624.2 1619.2 V1630 H588.6 M600.4 1618 L588.4 1630 L600.4 1642" fill="none" stroke="#ffffff" stroke-width="4.3" stroke-linecap="butt" stroke-linejoin="miter"/><path d="M756 1596.9 A17.9 17.9 0 1 1 764.6 1573.6" fill="none" stroke="#d6d6d6" stroke-width="2.2" stroke-linecap="round" stroke-linejoin="miter"/><circle cx="763.9" cy="1590.5" r="9.3" fill="#d6d6d6"/><circle cx="759.6999999999999" cy="1590.5" r="1.25" fill="#2b2b2b"/><circle cx="763.9" cy="1590.5" r="1.25" fill="#2b2b2b"/><circle cx="768.1" cy="1590.5" r="1.25" fill="#2b2b2b"/><path d="M743.2 1572.6 L737.8 1578 L743.2 1583.4 M738.2 1578 H750.6 A4.6 4.6 0 0 1 750.6 1587.2 H746.4" fill="none" stroke="#d6d6d6" stroke-width="2.3" stroke-linecap="round" stroke-linejoin="round"/><path d="M837.5 1564.4 h37.2 a7 7 0 0 1 7 7 v23.1 a7 7 0 0 1 -7 7 h-37.2 a7 7 0 0 1 -7 -7 v-23.1 a7 7 0 0 1 7 -7 z" fill="none" stroke="#d6d6d6" stroke-width="2.4" stroke-linecap="butt" stroke-linejoin="miter"/><path d="M1088.2 1570.6 H1099.8 M1081.4 1594.8 H1093 M1094 1570.6 L1087.4 1594.8" fill="none" stroke="#4370f0" stroke-width="2.7" stroke-linecap="round" stroke-linejoin="miter"/><path d="M1184.4 1568 V1584.4 A9.25 9.25 0 0 0 1202.9 1584.4 V1568" fill="none" stroke="#4370f0" stroke-width="2.9" stroke-linecap="butt" stroke-linejoin="miter"/><path d="M1183 1599.8 H1204.4" fill="none" stroke="#4370f0" stroke-width="2.3" stroke-linecap="butt" stroke-linejoin="miter"/><path d="M1280.6 1591.6 L1295.1 1577.1 L1309.6 1591.6" fill="none" stroke="#4a4a4a" stroke-width="3.1" stroke-linecap="round" stroke-linejoin="round"/><path d="M1382.8 1574.6 L1397.1 1588.9 L1411.4 1574.6" fill="none" stroke="#4a4a4a" stroke-width="3.1" stroke-linecap="round" stroke-linejoin="round"/><path d="M1525.7 1571 a5.8 5.8 0 0 1 11.6 0 v12.4 a5.8 5.8 0 0 1 -11.6 0 z" fill="none" stroke="#d6d6d6" stroke-width="2.4" stroke-linecap="butt" stroke-linejoin="miter"/><path d="M1519.1 1580 V1583 a12.4 12.4 0 0 0 24.8 0 V1580 M1531.5 1596 V1602 M1523 1602.4 H1540" fill="none" stroke="#d6d6d6" stroke-width="2.4" stroke-linecap="round" stroke-linejoin="miter"/><path d="M1630 1569.2 H1645.4 a4.2 4.2 0 0 1 4.2 4.2 V1583.8 a4.2 4.2 0 0 1 -4.2 4.2 H1616.4 M1627.6 1576.4 L1616 1588 L1627.6 1599.6" fill="none" stroke="#d6d6d6" stroke-width="2.7" stroke-linecap="round" stroke-linejoin="round"/>
<g font-family="Liberation Sans, sans-serif" font-size="47" fill="#ffffff" text-anchor="middle">
<text x="46" y="1358">A</text><text x="110" y="1358">Z</text><text x="174" y="1358">E</text><text x="238" y="1358">R</text><text x="302" y="1358">T</text><text x="366" y="1358">Y</text><text x="430" y="1358">U</text><text x="494" y="1358">I</text><text x="558" y="1358">O</text><text x="622" y="1358">P</text>
<text x="46" y="1454">Q</text><text x="110" y="1454">S</text><text x="174" y="1454">D</text><text x="238" y="1454">F</text><text x="302" y="1454">G</text><text x="366" y="1454">H</text><text x="430" y="1454">J</text><text x="494" y="1454">K</text><text x="558" y="1454">L</text><text x="622" y="1454">M</text>
<text x="174" y="1551">W</text><text x="238" y="1551">X</text><text x="302" y="1551">C</text><text x="366" y="1551">V</text><text x="430" y="1551">B</text><text x="494" y="1551">N</text>
</g>
<g font-family="Liberation Sans, sans-serif" font-size="19" fill="#b4b4b4" text-anchor="end">
<text x="63" y="1325.5">1</text><text x="128" y="1325.5">2</text><text x="192" y="1325.5">3</text><text x="256.5" y="1325.5">4</text><text x="320" y="1325.5">5</text><text x="384" y="1325.5">6</text><text x="448" y="1325.5">7</text><text x="512" y="1325.5">8</text><text x="576" y="1325.5">9</text><text x="640" y="1325.5">0</text>
</g>
<text x="54.3" y="1639.2" font-family="Liberation Sans, sans-serif" font-size="31" fill="#ffffff" text-anchor="middle">123</text>
<text x="366" y="1637" font-family="Liberation Sans, sans-serif" font-size="25" fill="#dedede" text-anchor="middle">EN · FR</text>
<text x="357.7" y="1261.1" font-family="Liberation Sans, sans-serif" font-size="31" fill="#ffffff" text-anchor="middle">Ok</text>
</svg>
<span class="t" style="left:975.83px;top:1565.13px;font-size:36px;color:#4370f0;font-weight:bold;-webkit-text-stroke:.6px #4370f0;">B</span>
<span class="t" style="left:839.3px;top:1570.2px;font-size:25.6px;font-weight:bold;color:#c9c9c9;transform-origin:0 0;transform:scaleX(.485)">FRFR</span>
</div>
</body></html>
